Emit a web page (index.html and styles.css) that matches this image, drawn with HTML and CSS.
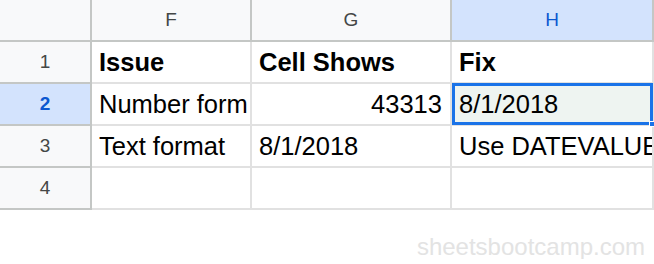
FILE: index.html
```html
<!DOCTYPE html>
<html lang="en">
<head>
  <meta charset="UTF-8" />
  <title>Sheet - date formats</title>
  <link rel="stylesheet" href="styles.css">
</head>
<body>

  <div class="sheet">
    <!-- Spaltenkoepfe -->
    <div class="corner"></div>
    <div class="col-head">F</div>
    <div class="col-head">G</div>
    <div class="col-head active">H</div>

    <!-- Zeile 1 -->
    <div class="row-head">1</div>
    <div class="cell bold">Issue</div>
    <div class="cell bold">Cell Shows</div>
    <div class="cell bold">Fix</div>

    <!-- Zeile 2 -->
    <div class="row-head active">2</div>
    <div class="cell"><span class="clip">Number format</span></div>
    <div class="cell num">43313</div>
    <div class="cell selected">8/1/2018<span class="handle"></span></div>

    <!-- Zeile 3 -->
    <div class="row-head">3</div>
    <div class="cell">Text format</div>
    <div class="cell">8/1/2018</div>
    <div class="cell">Use DATEVALUE</div>

    <!-- Zeile 4 -->
    <div class="row-head">4</div>
    <div class="cell"></div>
    <div class="cell"></div>
    <div class="cell"></div>
  </div>

  <div class="watermark">sheetsbootcamp.com</div>

</body>
</html>
```

FILE: styles.css
```css
body {
  margin: 0;
  background-color: #ffffff;
  font-family: "Liberation Sans", Arial, sans-serif;
  overflow: hidden;
}
.sheet {
  display: grid;
  grid-template-columns: 92px 160px 200px 202px;
  grid-auto-rows: 42px;
  width: 654px;
}
.corner, .col-head, .row-head {
  background-color: #f8f9fa;
  color: #444746;
  font-size: 19px;
  box-sizing: border-box;
  display: flex;
  align-items: center;
  justify-content: center;
  border-right: 2px solid #c4c7c5;
  border-bottom: 2px solid #c4c7c5;
}
.col-head.active {
  background-color: #d3e3fd;
  color: #0b57d0;
}
.row-head.active {
  background-color: #d3e3fd;
  color: #0b57d0;
  font-weight: bold;
}
.cell {
  position: relative;
  box-sizing: border-box;
  border-right: 2px solid #e1e1e1;
  border-bottom: 2px solid #e1e1e1;
  padding: 0 7px;
  font-size: 25.5px;
  line-height: 40px;
  color: #000000;
  white-space: nowrap;
  overflow: hidden;
}
.clip {
  display: block;
  overflow: hidden;
  margin-right: -5px;
}
.bold {
  font-weight: bold;
}
.num {
  text-align: right;
  padding-right: 8px;
}
.selected {
  overflow: visible;
  background-color: #eef4f1;
  z-index: 1;
}
.selected::before {
  content: "";
  position: absolute;
  left: 0;
  top: -1px;
  right: -1px;
  bottom: -1px;
  border: 3px solid #1a73e8;
  pointer-events: none;
}
.handle {
  position: absolute;
  right: -3px;
  bottom: -3px;
  width: 6px;
  height: 6px;
  background-color: #1a73e8;
  border: 1px solid #ffffff;
  box-sizing: border-box;
}
.watermark {
  margin-top: 25px;
  padding-right: 9px;
  text-align: right;
  font-size: 24px;
  line-height: 24px;
  color: #e3e3e3;
}
```
